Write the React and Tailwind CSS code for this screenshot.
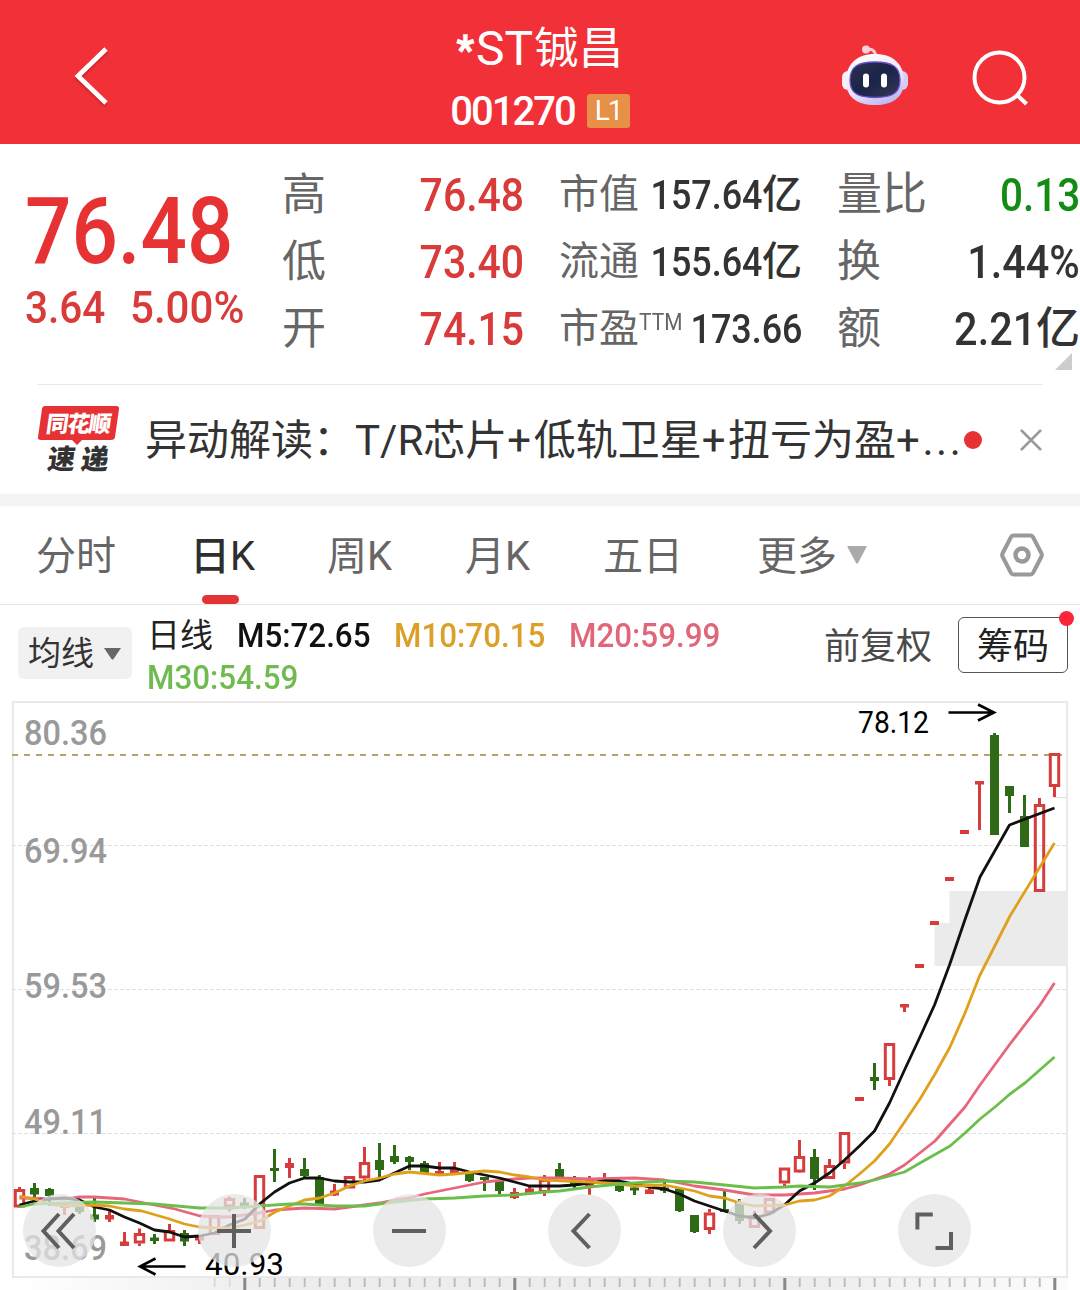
import React from "react";

const CANDLE_STEP = 15;
const FIRST_X = 19.5;

// [kind, high, low, bodyTop, bodyBottom] — kind: h = hollow rise, r = solid rise, g = fall
const candles = [
  ["h", 1187, 1208, 1189, 1207.5], ["g", 1183, 1197.5, 1188, 1194.5], ["g", 1188, 1206, 1189, 1196],
  ["r", 1204, 1215, 1204, 1208], ["g", 1205, 1214, 1207, 1212], ["g", 1198, 1222, 1214.5, 1219.5],
  ["r", 1211, 1222, 1215, 1219.5], ["r", 1232, 1246, 1241.5, 1246], ["h", 1228.5, 1246, 1233, 1243.5],
  ["g", 1234, 1244, 1237.5, 1241], ["h", 1224, 1241, 1230, 1241.5], ["g", 1230, 1246, 1233, 1241.5],
  ["r", 1235, 1244, 1236, 1240.5], ["h", 1215, 1235, 1215, 1235], ["h", 1196.5, 1211.5, 1198, 1207.5],
  ["g", 1198, 1209, 1202.5, 1206], ["h", 1175, 1229, 1175, 1229], ["g", 1149, 1182, 1168, 1171],
  ["r", 1158, 1178, 1163, 1168], ["g", 1158, 1178, 1169, 1176], ["g", 1175, 1204, 1177, 1204],
  ["r", 1184, 1196, 1190.5, 1195.5], ["h", 1176, 1188, 1176, 1188.5], ["h", 1147, 1181, 1162, 1178.5],
  ["g", 1143, 1179, 1160, 1170], ["g", 1145, 1164, 1156, 1162], ["g", 1156, 1170, 1157, 1162],
  ["g", 1161, 1173, 1163, 1173], ["r", 1162, 1175, 1171, 1175], ["r", 1162, 1174, 1168.5, 1173.5],
  ["g", 1173, 1182, 1173, 1181], ["g", 1177, 1191, 1177, 1180], ["g", 1177, 1194, 1180, 1191],
  ["r", 1188, 1199, 1192, 1198], ["r", 1186, 1193, 1188.5, 1193], ["h", 1175, 1196, 1179, 1193],
  ["g", 1163, 1179, 1169, 1179], ["g", 1176, 1188, 1178, 1184], ["r", 1176, 1195, 1180, 1186],
  ["r", 1173, 1184, 1180, 1184], ["g", 1184, 1192, 1185, 1191], ["g", 1186, 1195, 1187.5, 1190.5],
  ["r", 1187, 1194, 1189.5, 1194], ["g", 1182, 1193, 1187.5, 1191], ["g", 1187, 1212, 1188.5, 1211],
  ["g", 1215, 1233, 1215, 1232], ["h", 1209, 1234, 1212.5, 1230], ["g", 1191, 1212, 1209, 1212],
  ["g", 1199, 1224, 1203, 1221], ["h", 1211, 1228, 1215, 1228], ["h", 1198, 1215, 1198, 1213.5],
  ["h", 1168, 1186, 1167.5, 1183.5], ["h", 1140, 1173, 1156, 1172.5], ["g", 1149, 1190, 1157, 1179],
  ["h", 1159, 1179, 1165, 1179], ["h", 1132, 1169, 1132, 1163.5], ["r", 1097, 1101, 1097, 1101],
  ["g", 1063, 1090, 1077, 1081], ["h", 1043, 1086, 1043, 1080], ["r", 1004, 1012, 1004, 1007.5],
  ["r", 964, 968, 964, 968], ["r", 921, 925, 921, 925], ["r", 877, 881, 877, 881],
  ["r", 830, 834, 830, 834], ["r", 781, 830, 781, 784.5], ["g", 733, 835, 735, 835],
  ["g", 786, 813, 786, 796], ["g", 795, 847, 816, 847], ["h", 798, 892, 804, 892],
  ["h", 753, 797, 753, 787],
];

const averages = [
  { color: "#e8657c", points: "19.5,1198 64.5,1199 80,1197 94.5,1197 124.5,1199 139.5,1202 154.5,1205 175,1209 200,1216 214.5,1217 229.5,1217 259.5,1213 275,1210 289.5,1209 304.5,1208 334.5,1209 349.5,1207 379.5,1203 394.5,1200 409.5,1198 424.5,1194 454.5,1188 469.5,1185 484.5,1182 514.5,1179 529.5,1178 559.5,1178 589.5,1179 634.5,1178 649.5,1179 664.5,1180 679.5,1183 694.5,1186 724.5,1190 754.5,1195 784.5,1195 814.5,1193 844.5,1189 859.5,1185 889.5,1174 904.5,1165 935,1141 950,1124 965,1107 980,1085 1010,1044 1040,1005 1054.5,983" },
  { color: "#111111", points: "19.5,1205 34.5,1201 49.5,1199 64.5,1198 79.5,1200 94.5,1207 109.5,1210 124.5,1217 139.5,1223 154.5,1230 169.5,1232 184.5,1237 199.5,1236 214.5,1233 229.5,1225 245,1219 259.5,1204 274.5,1192 289.5,1183 304.5,1178 319.5,1178 334.5,1181 349.5,1182 364.5,1182 379.5,1180 394.5,1173 409.5,1166 424.5,1166 439.5,1168 454.5,1168 469.5,1172 484.5,1175 499.5,1178 514.5,1182 529.5,1186 559.5,1186 574.5,1185 589.5,1183 604.5,1181 619.5,1181 634.5,1184 649.5,1187 664.5,1189 679.5,1194 694.5,1201 709.5,1206 724.5,1211 739.5,1216 754.5,1218 769.5,1214 784.5,1205 799.5,1191 814.5,1183 829.5,1173 844.5,1160 859.5,1146 874.5,1131 889.5,1103 904.5,1070 919.5,1038 934.5,1005 949.5,965 964.5,921 980,877 1009.5,825 1054.5,808" },
  { color: "#e0a01c", points: "19.5,1196 34.5,1199 49.5,1204 64.5,1206 94.5,1205 109.5,1206 124.5,1209 142,1211 169.5,1219 184.5,1224 199.5,1227 214.5,1228 229.5,1228 245,1225 260,1221 275,1212 289.5,1206 304.5,1200 319.5,1198 334.5,1193 349.5,1186 364.5,1181 379.5,1178 394.5,1174 409.5,1172 439.5,1175 454.5,1174 484.5,1171 499.5,1172 514.5,1175 529.5,1177 544.5,1180 589.5,1182 619.5,1184 634.5,1186 664.5,1185 679.5,1188 694.5,1191 709.5,1196 724.5,1198 739.5,1203 754.5,1206 784.5,1205 799.5,1201 814.5,1200 829.5,1196 844.5,1186 859.5,1174 874.5,1161 889.5,1144 904.5,1122 920,1099 935,1074 950,1047 965,1013 979.5,976 1010,916 1054.5,843" },
  { color: "#6abf4b", points: "19.5,1207 34.5,1204 94.5,1202 124.5,1203 154.5,1204 199.5,1208 229.5,1208 289.5,1204 304.5,1204 334.5,1206 364.5,1206 394.5,1202 424.5,1199 454.5,1198 484.5,1196 514.5,1195 544.5,1192 559.5,1191 589.5,1187 619.5,1184 664.5,1181 694.5,1182 724.5,1185 754.5,1188 784.5,1187 799.5,1186 829.5,1187 859.5,1183 874.5,1180 904.5,1172 920,1163 950,1146 965,1133 980,1119 995,1107 1010,1094 1025,1083 1054.5,1057" },
];

const axisLabels = [
  ["80.36", 745], ["69.94", 863], ["59.53", 998], ["49.11", 1133.5], ["38.69", 1260],
];

function Candle({ x, data }) {
  const [kind, high, low, top, bottom] = data;
  const color = kind === "g" ? "#2f6a16" : "#d63c3c";
  if (kind === "h") {
    return (
      <g stroke={color} strokeWidth="3" fill="none">
        {high < top && <path d={`M${x} ${high}V${top}`} />}
        {low > bottom && <path d={`M${x} ${bottom}V${low}`} />}
        <rect x={x - 4.2} y={top + 1.5} width="8.4" height={bottom - top - 3} />
      </g>
    );
  }
  return (
    <g fill={color}>
      <rect x={x - 1.5} y={high} width="3" height={low - high} />
      <rect x={x - 4.5} y={top} width="9" height={bottom - top} />
    </g>
  );
}

function Chart() {
  const ticks = Array.from({ length: 57 }, (_, i) => 214.5 + i * CANDLE_STEP);
  return (
    <svg className="block h-[590px] w-[1080px]" viewBox="0 700 1080 590">
      <defs>
        <linearGradient id="band" x1="0" x2="1">
          <stop offset="0" stopColor="#fff" />
          <stop offset="0.25" stopColor="#ededed" />
          <stop offset="0.75" stopColor="#ededed" />
          <stop offset="1" stopColor="#fbfbfb" />
        </linearGradient>
        <clipPath id="plot"><rect x="12" y="700" width="1060" height="434.5" /></clipPath>
      </defs>
      <rect x="13" y="702" width="1054" height="575" fill="none" stroke="#e9e9e9" strokeWidth="2" />
      <path d="M949.5 891H1068V966H934.5V923H949.5Z" fill="#ebebeb" />
      <path d="M1054 797.5H1067" stroke="#dedede" />
      <g stroke="#dfdfdf" strokeWidth="1.2" strokeDasharray="4 2">
        <path d="M12 845.5H1066" /><path d="M12 989.5H1066" /><path d="M12 1133.5H1066" />
      </g>
      <path d="M12 755H1066" stroke="#b5a36b" strokeWidth="1.8" strokeDasharray="6 6" />
      <g fill="#999" fontSize="35.5" fontWeight="500" fontFamily="Roboto, sans-serif">
        {axisLabels.map(([t, y]) => (
          <text key={t} x="24" y={y} textLength="83" lengthAdjust="spacingAndGlyphs" clipPath={t === "49.11" ? "url(#plot)" : undefined}>{t}</text>
        ))}
      </g>
      {candles.map((c, i) => <Candle key={i} x={FIRST_X + i * CANDLE_STEP} data={c} />)}
      {averages.map((a) => (
        <polyline key={a.color} points={a.points} fill="none" stroke={a.color} strokeWidth="2.8" strokeLinejoin="round" />
      ))}
      <g fontSize="31.500" fill="#000" fontFamily="Roboto, sans-serif">
        <text x="858" y="732.500" textLength="71" lengthAdjust="spacingAndGlyphs">78.12</text>
        <text x="205" y="1275" textLength="79" lengthAdjust="spacingAndGlyphs">40.93</text>
      </g>
      <g fill="none" stroke="#000" strokeWidth="2.6">
        <path d="M948.5 712.5H994M978 704.500L994 712.5L978 720.500" />
        <path d="M185.5 1266.5H140M155.500 1258.500L140 1266.500L155.500 1274.500" />
      </g>
      <rect x="13" y="1278" width="1055" height="12" fill="url(#band)" />
      {ticks.map((x, i) => {
        const major = (i - 2) % 18 === 0;
        return <rect key={x} x={x - (major ? 1.2 : 0.8)} y="1278" width={major ? 3 : 2} height={major ? 12 : 9} fill={major ? "#888" : i < 2 ? "#dcdcdc" : "#bdbdbd"} />;
      })}
    </svg>
  );
}

const controls = [
  ["rewind", "M19 1L3.500 18L19 35M34 1L18.500 18L34 35"],
  ["zoom in", "M19 1V35M2 18H36"],
  ["zoom out", "M2 18H36"],
  ["previous", "M24.500 1L8.500 18L24.500 35"],
  ["next", "M14 1L30 18L14 35"],
  ["fullscreen", "M2.400 16.500V1.500H17.800M20.500 35H36V19"],
];

function Controls() {
  return (
    <div className="absolute top-[494px] left-[23px] flex gap-[102px]">
      {controls.map(([name, d]) => (
        <button key={name} aria-label={name} className="flex size-[73px] items-center justify-center rounded-full bg-[#e4e4e4]/75">
          <svg width="38" height="36" viewBox="0 0 38 36" className="-ml-0.5 overflow-visible" fill="none" stroke="#5f5f5f" strokeWidth="4">
            <path d={d} />
          </svg>
        </button>
      ))}
    </div>
  );
}

function Robot() {
  return (
    <svg width="66" height="62" viewBox="0 0 66 62">
      <defs>
        <linearGradient id="shell" x1="0.2" y1="0" x2="0.7" y2="1">
          <stop offset="0" stopColor="#fff" />
          <stop offset="0.6" stopColor="#ece4fa" />
          <stop offset="1" stopColor="#b9b6f2" />
        </linearGradient>
        <linearGradient id="visor" x1="0" y1="0" x2="1" y2="1">
          <stop offset="0" stopColor="#2c3150" />
          <stop offset="0.5" stopColor="#1b2346" />
          <stop offset="1" stopColor="#37395c" />
        </linearGradient>
      </defs>
      <path d="M24 5C30 3 34 6 33.500 12" fill="none" stroke="#f9c9d4" strokeWidth="3" />
      <circle cx="24" cy="4.500" r="4" fill="#fbd3dc" />
      <rect x="0" y="26" width="12" height="19" rx="6" fill="#f7f0fb" />
      <rect x="54" y="26" width="12" height="19" rx="6" fill="#d5cdf6" />
      <path d="M33 9C51 9 62 19 62 36C62 52 51 60 33 60C15 60 4 52 4 36C4 19 15 9 33 9Z" fill="url(#shell)" />
      <path d="M33 17C50 17 58 21.500 58 35C58 48.500 50 52.500 33 52.500C16 52.500 8 48.500 8 35C8 21.500 16 17 33 17Z" fill="url(#visor)" stroke="#6a50c8" strokeWidth="1.300" />
      <rect x="21" y="28.500" width="6" height="14" rx="3" fill="#fff" />
      <rect x="39" y="28.500" width="6" height="14" rx="3" fill="#fff" />
    </svg>
  );
}

function Header() {
  return (
    <header className="grid h-36 grid-cols-[450px_180px_450px] bg-[#f23038] text-white">
      <svg className="mt-[46px] ml-[74px] drop-shadow-[0_2px_1px_rgba(120,20,20,0.4)]" width="36" height="60" viewBox="0 0 36 60" fill="none" stroke="#fff" strokeWidth="4.800">
        <path d="M32 3L4 30L32 57" />
      </svg>
      <div className="flex flex-col items-center">
        <h1 className="mt-[26px] flex h-[46px] items-center leading-none whitespace-nowrap">
          <span className="mt-[4px] mr-[2px] text-[40px] [-webkit-text-stroke:1.500px_white]">*</span>
          <span className="text-[48px]">ST</span>
          <span className="ml-px text-[44.500px]">铖昌</span>
        </h1>
        <div className="mt-[18px] flex h-[42px] items-center gap-[12px]">
          <span className="mt-px text-[40px] leading-none font-medium tracking-[-2px]">001270</span>
          <span className="flex h-[34px] w-[43px] items-center justify-center rounded-[3px] bg-[#e69048] text-[28px] leading-none tracking-[-2px]">L1</span>
        </div>
      </div>
      <div className="flex">
        <div className="mt-[45px] ml-[212px] w-[66px]"><Robot /></div>
        <svg className="mt-[49px] ml-[63px]" width="60" height="60" viewBox="0 0 60 60" fill="none" stroke="#fff" strokeWidth="4">
          <circle cx="28.500" cy="28.500" r="25" /><path d="M46 46L55.500 55" />
        </svg>
      </div>
    </header>
  );
}

function Row({ label, sup, value, unit, labelClass, valueClass }) {
  return (
    <div className="flex h-[67px] items-center justify-between whitespace-nowrap">
      <span className={`flex items-center leading-none text-[#666] ${labelClass}`}>
        {label}
        {sup && <sup className="top-[-6px] inline-block origin-left scale-x-[0.91] text-[23px] leading-none">{sup}</sup>}
      </span>
      <span className="-ml-10 flex items-center leading-none">
        <span className={`inline-block origin-right font-medium ${valueClass}`}>{value}</span>
        {unit && <span className={`font-medium text-[#333] ${labelClass}`}>{unit}</span>}
      </span>
    </div>
  );
}

function Quote() {
  const red = "mt-[3px] scale-x-[0.9] text-[45.500px] text-[#d93a3a]";
  const mid = "scale-x-[0.865] text-[41.500px] text-[#333]";
  return (
    <section className="flex h-[240px]">
      <div className="w-[282px] pl-[25px] leading-none font-medium text-[#e63232]">
        <div className="mt-[42px] origin-left scale-x-[0.888] text-[92px]">76.48</div>
        <div className="mt-[7px] flex text-[45px] text-[#d93a3a]">
          <span className="w-[105px] origin-left scale-x-[0.9]">3.64</span>
          <span className="origin-left scale-x-[0.935]">5.00%</span>
        </div>
      </div>
      <div className="w-[242px] pt-[17px]">
        <Row label="高" value="76.48" labelClass="text-[44px]" valueClass={red} />
        <Row label="低" value="73.40" labelClass="text-[44px]" valueClass={red} />
        <Row label="开" value="74.15" labelClass="text-[44px]" valueClass={red} />
      </div>
      <div className="ml-[35px] w-[243px] pt-[17px]">
        <Row label="市值" value="157.64" unit="亿" labelClass="text-[40px]" valueClass={mid} />
        <Row label="流通" value="155.64" unit="亿" labelClass="text-[40px]" valueClass={mid} />
        <Row label="市盈" sup="TTM" value="173.66" labelClass="text-[40px]" valueClass={mid} />
      </div>
      <div className="relative ml-[35px] w-[243px] pt-[17px]">
        <Row label="量比" value="0.13" labelClass="text-[45px]" valueClass="mt-[3px] scale-x-[0.89] text-[45.500px] text-[#128c12]" />
        <Row label="换" value="1.44%" labelClass="text-[44px]" valueClass="mt-[3px] scale-x-[0.91] text-[45.500px] text-[#333]" />
        <Row label="额" value="2.21" unit="亿" labelClass="text-[44px]" valueClass="mt-[3px] scale-x-[0.91] text-[45.500px] text-[#333]" />
        <svg className="absolute right-[8px] bottom-[14px]" width="17" height="17"><path d="M17 0V17H0Z" fill="#ccc" /></svg>
      </div>
    </section>
  );
}

function News() {
  return (
    <section className="mx-[37px] flex h-[110px] items-center border-t border-[#e9e9e9] text-[42px] leading-none text-[#333]">
      <svg className="shrink-0 overflow-visible" width="83" height="70" viewBox="0 0 83 70" fontFamily="'Noto Sans CJK SC', sans-serif" fontWeight="900">
        <path d="M8 1H79Q82.500 1 82 4L78 32Q77.500 35 74 35H45L40 40L35 35H4Q0.500 35 1 32L5 4Q5.500 1 8 1Z" fill="#e63235" />
        <text x="12" y="27" fontSize="22.500" fill="#fff" textLength="65" transform="skewX(-8)">同花顺</text>
        <text x="18.500" y="64" fontSize="27.500" fill="#333" textLength="61" transform="skewX(-8)">速递</text>
      </svg>
      <p className="mt-0.5 ml-[25px] w-[820px] whitespace-nowrap">
        异动解读：T/R芯片<span className="tracking-[2.500px]">+</span>低轨卫星<span className="tracking-[2.500px]">+</span>扭亏为盈<span className="tracking-[2.600px]">+...</span>
      </p>
      <span className="-ml-px size-[18px] shrink-0 rounded-full bg-[#e63232]" />
      <svg className="ml-[38px] shrink-0" width="22" height="22" viewBox="0 0 22 22" stroke="#999" strokeWidth="2.500"><path d="M1 1L21 21M21 1L1 21" /></svg>
    </section>
  );
}

function Tabs() {
  return (
    <nav className="flex h-[99px] items-center border-b border-[#e6e6e6] text-[40px] leading-none whitespace-nowrap text-[#666]">
      <span className="mt-1 ml-[36px] w-[154px]">分时</span>
      <span className="relative flex h-full w-[137px] items-center pt-1 text-[#2e2e2e]">
        <b className="font-medium">日</b>K
        <i className="absolute bottom-0 left-[12px] h-[9px] w-[37px] rounded-full bg-[#e23434]" />
      </span>
      <span className="mt-1 w-[138px]">周K</span>
      <span className="mt-1 w-[138px]">月K</span>
      <span className="mt-1 w-[154px]">五日</span>
      <span className="flex w-[242px] items-center gap-[10px]">
        <span className="mt-1">更多</span>
        <svg width="20" height="18"><path d="M1 0H19Q20 0 19.500 1L11 17Q10 18 9 17L0.500 1Q0 0 1 0Z" fill="#aaa" /></svg>
      </span>
      <svg width="46" height="44" viewBox="0 0 46 44" fill="none" stroke="#999">
        <path d="M14.500 2.500H31.500Q33 2.500 34 4L42.500 20.500Q43.200 22 42.500 23.500L34 40Q33 41.500 31.500 41.500H14.500Q13 41.500 12 40L3.500 23.500Q2.800 22 3.500 20.500L12 4Q13 2.500 14.500 2.500Z" strokeWidth="4" />
        <circle cx="23" cy="22" r="6.500" strokeWidth="4.500" />
      </svg>
    </nav>
  );
}

function Legend() {
  return (
    <section className="flex h-[95px] leading-none whitespace-nowrap">
      <div className="mt-[22px] ml-[18px] flex h-[52px] w-[114px] items-center gap-[10px] rounded-md bg-[#f1f1f1] pl-[10px] text-[33px] text-[#333]">
        均线
        <svg className="shrink-0" width="17" height="13"><path d="M0 1H17L9.500 12Q8.500 13 7.500 12Z" fill="#666" /></svg>
      </div>
      <div className="ml-[15px] w-[677px] pt-[9px] text-[34px] font-medium">
        <div className="flex h-[42px] items-center">
          <span className="w-[90px] text-[33px] font-normal text-[#222]">日线</span>
          <span className="w-[157px] origin-left scale-x-[0.922] text-[#111]">M5:72.65</span>
          <span className="w-[175px] origin-left scale-x-[0.922] text-[#dca02a]">M10:70.15</span>
          <span className="origin-left scale-x-[0.922] text-[#e0667a]">M20:59.99</span>
        </div>
        <div className="h-[42px] pt-1"><span className="inline-block origin-left scale-x-[0.922] text-[#6fbb50]">M30:54.59</span></div>
      </div>
      <span className="mt-[24px] w-[134px] text-[36px] text-[#4a4a4a]">前复权</span>
      <div className="relative mt-[12px] flex h-[56px] w-[110px] items-center justify-center rounded-md border border-[#555] pt-1 text-[36px] text-[#222]">
        筹码
        <i className="absolute -top-[7px] -right-[7px] size-[15px] rounded-full bg-[#fa2638]" />
      </div>
    </section>
  );
}

export default function App() {
  return (
    <main lang="zh-CN" className="h-[1290px] w-[1080px] overflow-hidden bg-white font-['Roboto','Noto_Sans_CJK_SC',sans-serif]">
      <Header />
      <Quote />
      <News />
      <div className="h-3 bg-[#f4f4f4]" />
      <Tabs />
      <Legend />
      <section className="relative h-[590px]">
        <Chart />
        <Controls />
      </section>
    </main>
  );
}
